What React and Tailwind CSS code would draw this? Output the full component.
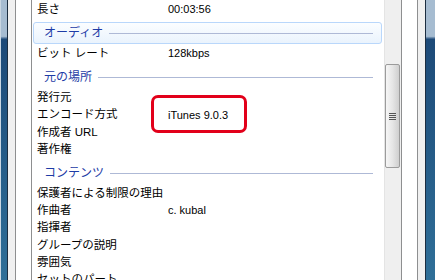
const font = { fontFamily: '"Liberation Sans", "Noto Sans CJK JP", sans-serif' };

const Row = ({ label, value }) => (
  <div className="flex h-[17.2px] items-center pl-[5px] text-black">
    <span className="w-[131px] shrink-0 text-[11.5px] leading-none">{label}</span>
    {value && <span className="text-[11px] leading-none">{value}</span>}
  </div>
);

const Group = ({ title, active }) => (
  <div className="h-[27px] pt-[4px] pl-px pr-[2px]">
    <div
      className={
        "flex h-[22px] items-center rounded-[3px] border pl-[10px] pr-[8px] " +
        (active
          ? "border-[#b9d7fb] bg-gradient-to-b from-[#fbfdff] to-[#eaf3fd]"
          : "border-transparent")
      }
    >
      <span className="text-[12px] leading-none text-[#1e3ca6]">{title}</span>
      <div className="ml-[6px] h-px flex-1 bg-[#aeb9d6]" />
    </div>
  </div>
);

const Strip = () => (
  <div className="w-[7px] bg-gradient-to-b from-[#a6bcd1] from-[13%] via-[#1d4a78] via-[14%] to-[#2f6f98]" />
);

export default function App() {
  return (
    <div className="flex h-[280px] w-[435px] overflow-hidden bg-white" style={font}>
      <div className="w-px bg-[#c9d6e2]" />
      <div className="w-[6px] bg-gradient-to-b from-[#a6bcd1] from-[13%] via-[#1d4a78] via-[14%] to-[#2f6f98]" />
      <div className="w-px bg-[#1b2d40]" />
      <div className="w-[7px] bg-[#f0f0f0]" />
      <div className="w-px bg-[#8e8f90]" />
      <div className="w-[15px] bg-white" />
      <div className="w-px bg-[#8e8f90]" />

      <div className="relative w-[352px] pt-px">
        <Row label="長さ" value="00:03:56" />
        <Group title="オーディオ" active />
        <Row label="ビット レート" value="128kbps" />
        <Group title="元の場所" />
        <Row label="発行元" />
        <Row label="エンコード方式" value="iTunes 9.0.3" />
        <Row label="作成者 URL" />
        <Row label="著作権" />
        <Group title="コンテンツ" />
        <Row label="保護者による制限の理由" />
        <Row label="作曲者" value="c. kubal" />
        <Row label="指揮者" />
        <Row label="グループの説明" />
        <Row label="雰囲気" />
        <Row label="セットのパート" />

        <div className="absolute left-[119px] top-[95px] h-[38px] w-[96px] rounded-[7px] border-[3px] border-[#e2001a]" />
      </div>

      <div className="w-[17px] border-l border-[#e4e4e4] bg-[#efefef] pt-[64px]">
        <div className="flex h-[104px] w-[15px] items-center justify-center rounded-[2px] border border-[#9b9b9b] bg-gradient-to-r from-[#f6f6f6] via-[#e6e6e6] to-[#cfcfcf]">
          <div className="flex flex-col gap-px">
            <div className="h-px w-[7px] bg-[#555]" />
            <div className="h-px w-[7px] bg-[#555]" />
            <div className="h-px w-[7px] bg-[#555]" />
            <div className="h-px w-[7px] bg-[#555]" />
          </div>
        </div>
      </div>

      <div className="w-px bg-[#8e8f90]" />
      <div className="w-[15px] bg-white" />
      <div className="w-px bg-[#8e8f90]" />
      <div className="w-[7px] bg-[#f0f0f0]" />
      <div className="w-px bg-[#1b2d40]" />
      <div className="flex-1 bg-gradient-to-b from-[#a6bcd1] from-[13%] via-[#1d4a78] via-[14%] to-[#2f6f98]" />
    </div>
  );
}
